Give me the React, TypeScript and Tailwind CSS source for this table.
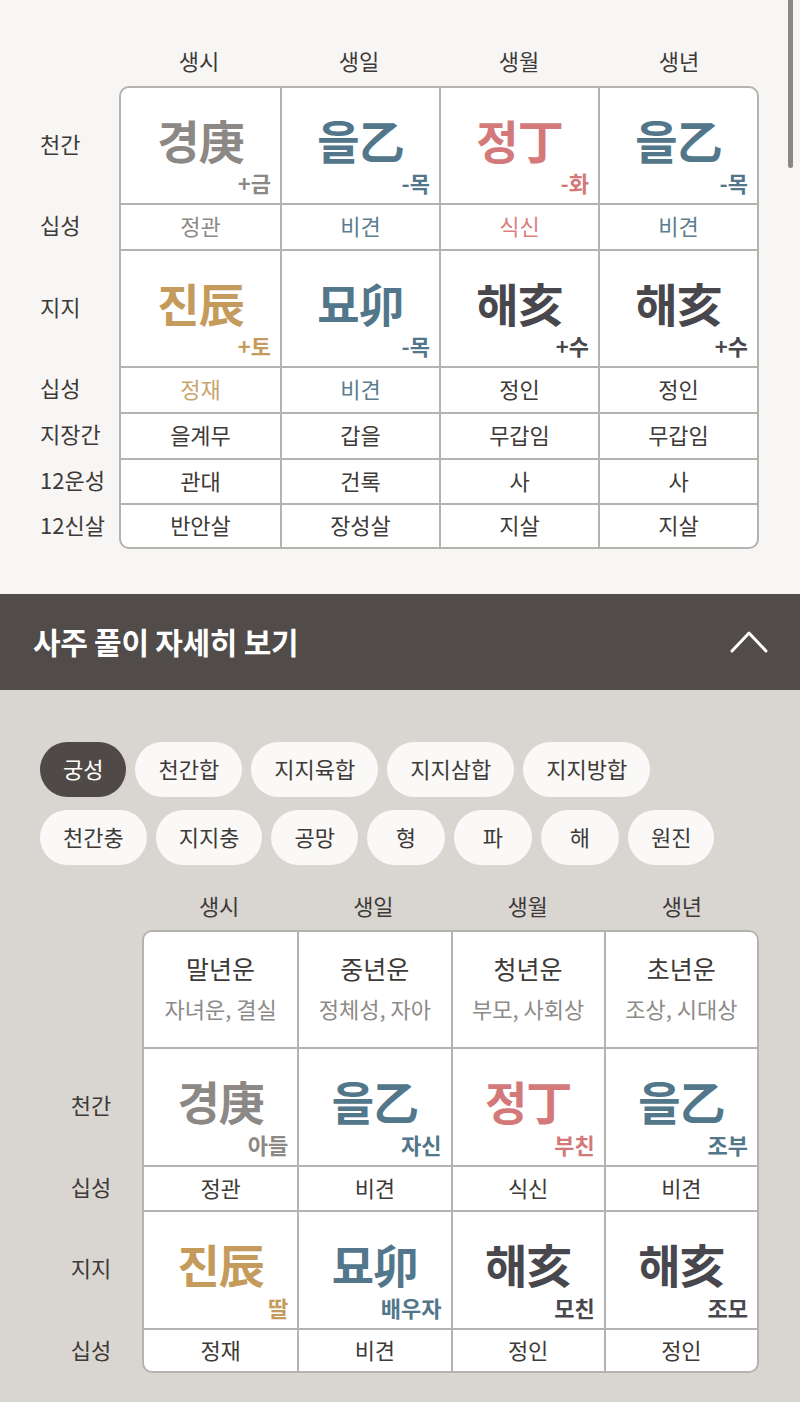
import React from 'react';

type Big = { t: string; s: string; c: string };
type Cell = { t: string; c?: string };

const GRAY = 'text-[#8c8885]';
const BLUE = 'text-[#52768a]';
const RED = 'text-[#d4797a]';
const GOLD = 'text-[#c49b5c]';
const DARK = 'text-[#48474d]';

const cols = ['생시', '생일', '생월', '생년'];

const topStems: Big[] = [
    { t: '경庚', s: '+금', c: GRAY },
    { t: '을乙', s: '-목', c: BLUE },
    { t: '정丁', s: '-화', c: RED },
    { t: '을乙', s: '-목', c: BLUE },
];
const topBranches: Big[] = [
    { t: '진辰', s: '+토', c: GOLD },
    { t: '묘卯', s: '-목', c: BLUE },
    { t: '해亥', s: '+수', c: DARK },
    { t: '해亥', s: '+수', c: DARK },
];

const chipRows = [
    ['궁성', '천간합', '지지육합', '지지삼합', '지지방합'],
    ['천간충', '지지충', '공망', '형', '파', '해', '원진'],
];

const lifeStages = [
    { t: '말년운', s: '자녀운, 결실' },
    { t: '중년운', s: '정체성, 자아' },
    { t: '청년운', s: '부모, 사회상' },
    { t: '초년운', s: '조상, 시대상' },
];

const palaceStems: Big[] = [
    { t: '경庚', s: '아들', c: GRAY },
    { t: '을乙', s: '자신', c: BLUE },
    { t: '정丁', s: '부친', c: RED },
    { t: '을乙', s: '조부', c: BLUE },
];
const palaceBranches: Big[] = [
    { t: '진辰', s: '딸', c: GOLD },
    { t: '묘卯', s: '배우자', c: BLUE },
    { t: '해亥', s: '모친', c: DARK },
    { t: '해亥', s: '조모', c: DARK },
];

function BigCell({ item }: { item: Big }) {
    return (
        <div className="relative flex items-center justify-center">
            <span className={`-mt-[14px] text-[46px] font-bold leading-none tracking-[-1px] ${item.c}`}>{item.t}</span>
            <span className={`absolute right-[9px] bottom-[10px] text-[22px] font-bold leading-none ${item.c}`}>{item.s}</span>
        </div>
    );
}

function TextRow({ cells, h, first }: { cells: Cell[]; h: string; first?: boolean }) {
    return (
        <div className={`grid grid-cols-4 ${h} ${first ? '' : 'border-t-2 border-[#b5b3b0]'}`}>
            {cells.map((c, i) => (
                <div
                    key={i}
                    className={`flex items-center justify-center pb-[3px] text-[22px] ${c.c ?? 'text-[#3d3a38]'} ${i ? 'border-l-2 border-[#b5b3b0]' : ''}`}
                >
                    {c.t}
                </div>
            ))}
        </div>
    );
}

function BigRow({ items, h, first }: { items: Big[]; h: string; first?: boolean }) {
    return (
        <div className={`grid grid-cols-4 ${h} ${first ? '' : 'border-t-2 border-[#b5b3b0]'}`}>
            {items.map((it, i) => (
                <div key={i} className={`grid ${i ? 'border-l-2 border-[#b5b3b0]' : ''}`}>
                    <BigCell item={it} />
                </div>
            ))}
        </div>
    );
}

export default function App() {
    return (
        <div className="relative w-[800px] font-['Noto_Sans_CJK_KR',sans-serif] text-[#3d3a38]">
            {/* scroll indicator */}
            <div className="absolute right-[7px] top-0 h-[168px] w-[5px] rounded-b-full bg-[#8a8785]" />

            {/* 원국표 */}
            <section className="bg-[#f7f6f4] pb-[45px] pl-[40px] pt-[46px]">
                <div className="ml-[79px] mb-[12px] grid h-[28px] w-[640px] grid-cols-4 text-[22px] leading-[28px]">
                    {cols.map((c) => (
                        <div key={c} className="text-center">{c}</div>
                    ))}
                </div>
                <div className="flex">
                    <div className="flex w-[79px] flex-col text-[22px]">
                        {[
                            ['천간', 'h-[117px]'],
                            ['십성', 'h-[46px]'],
                            ['지지', 'h-[117px]'],
                            ['십성', 'h-[46px]'],
                            ['지장간', 'h-[46px]'],
                            ['12운성', 'h-[45px]'],
                            ['12신살', 'h-[46px]'],
                        ].map(([l, h], i) => (
                            <div key={i} className={`flex items-center pb-[3px] ${h}`}>{l}</div>
                        ))}
                    </div>
                    <div className="w-[640px] overflow-hidden rounded-[10px] border-2 border-[#b5b3b0] bg-white">
                        <BigRow items={topStems} h="h-[115px]" first />
                        <TextRow
                            h="h-[46px]"
                            cells={[
                                { t: '정관', c: 'text-[#8c8885]' },
                                { t: '비견', c: 'text-[#5b7d90]' },
                                { t: '식신', c: 'text-[#d98080]' },
                                { t: '비견', c: 'text-[#5b7d90]' },
                            ]}
                        />
                        <BigRow items={topBranches} h="h-[117px]" />
                        <TextRow
                            h="h-[46px]"
                            cells={[
                                { t: '정재', c: 'text-[#c9a56b]' },
                                { t: '비견', c: 'text-[#5b7d90]' },
                                { t: '정인' },
                                { t: '정인' },
                            ]}
                        />
                        <TextRow h="h-[46px]" cells={[{ t: '을계무' }, { t: '갑을' }, { t: '무갑임' }, { t: '무갑임' }]} />
                        <TextRow h="h-[45px]" cells={[{ t: '관대' }, { t: '건록' }, { t: '사' }, { t: '사' }]} />
                        <TextRow h="h-[44px]" cells={[{ t: '반안살' }, { t: '장성살' }, { t: '지살' }, { t: '지살' }]} />
                    </div>
                </div>
            </section>

            {/* 접기 헤더 */}
            <div className="flex h-[96px] items-center justify-between bg-[#514c49] pl-[33px] pr-[32px]">
                <h2 className="pb-[2px] text-[30px] font-bold tracking-[-0.3px] text-white">사주 풀이 자세히 보기</h2>
                <svg width="38" height="24" viewBox="0 0 38 24" fill="none">
                    <polyline points="2,21 19,3 36,21" stroke="#ffffff" strokeWidth="3" strokeLinecap="round" strokeLinejoin="round" />
                </svg>
            </div>

            {/* 궁성 */}
            <section className="bg-[#d9d5d1] pb-[29px] pl-[40px] pt-[52px]">
                <div className="flex flex-col gap-[13px]">
                    {chipRows.map((row, r) => (
                        <div key={r} className="flex gap-[9px]">
                            {row.map((c, i) => (
                                <div
                                    key={c}
                                    className={`flex h-[55px] min-w-[78px] items-center justify-center rounded-full px-[23px] pb-[2px] text-[22px] ${
                                        r === 0 && i === 0 ? 'bg-[#4f4a47] text-white' : 'bg-[#faf9f7] text-[#3d3a38]'
                                    }`}
                                >
                                    {c}
                                </div>
                            ))}
                        </div>
                    ))}
                </div>

                <div className="ml-[102px] mb-[11px] mt-[26px] grid h-[28px] w-[617px] grid-cols-4 text-[22px] leading-[28px]">
                    {cols.map((c) => (
                        <div key={c} className="text-center">{c}</div>
                    ))}
                </div>
                <div className="flex">
                    <div className="flex w-[102px] flex-col text-[22px]">
                        {[
                            ['', 'h-[117px]'],
                            ['천간', 'h-[118px]'],
                            ['십성', 'h-[45px]'],
                            ['지지', 'h-[118px]'],
                            ['십성', 'h-[45px]'],
                        ].map(([l, h], i) => (
                            <div key={i} className={`flex items-center justify-center pb-[3px] ${h}`}>{l}</div>
                        ))}
                    </div>
                    <div className="w-[617px] overflow-hidden rounded-[10px] border-2 border-[#b5b3b0] bg-white">
                        <div className="grid h-[115px] grid-cols-4">
                            {lifeStages.map((s, i) => (
                                <div
                                    key={i}
                                    className={`flex flex-col items-center justify-center pb-[4px] ${i ? 'border-l-2 border-[#b5b3b0]' : ''}`}
                                >
                                    <span className="text-[25px] leading-[30px] text-[#3d3a38]">{s.t}</span>
                                    <span className="mt-[11px] text-[22px] leading-[28px] text-[#8d8a87]">{s.s}</span>
                                </div>
                            ))}
                        </div>
                        <BigRow items={palaceStems} h="h-[118px]" />
                        <TextRow h="h-[45px]" cells={[{ t: '정관' }, { t: '비견' }, { t: '식신' }, { t: '비견' }]} />
                        <BigRow items={palaceBranches} h="h-[118px]" />
                        <TextRow h="h-[43px]" cells={[{ t: '정재' }, { t: '비견' }, { t: '정인' }, { t: '정인' }]} />
                    </div>
                </div>
            </section>
        </div>
    );
}
